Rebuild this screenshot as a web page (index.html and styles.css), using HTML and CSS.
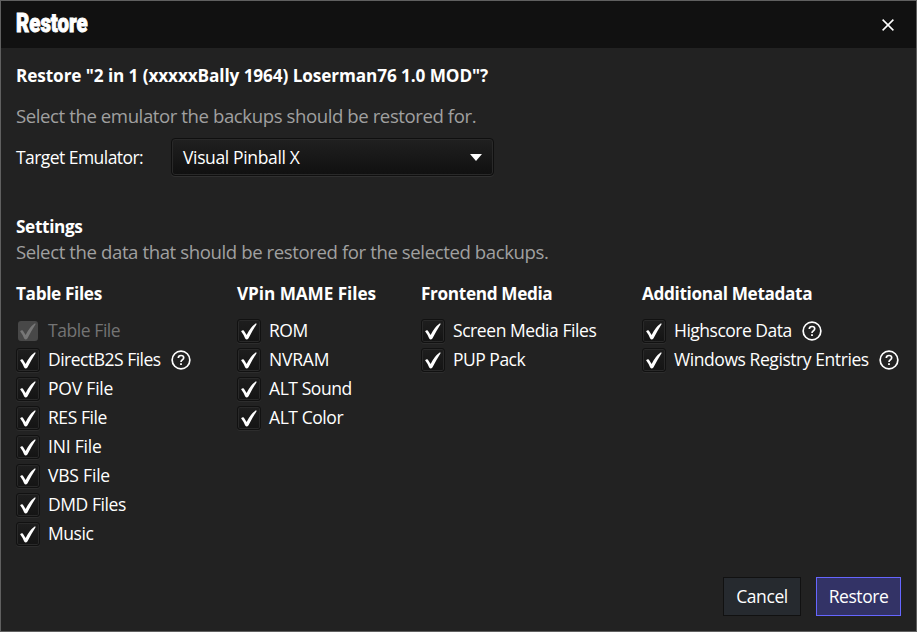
FILE: index.html
```
<!DOCTYPE html>
<html lang="en">
<head>
<meta charset="utf-8">
<title>Restore</title>
<link rel="stylesheet" href="styles.css">
</head>
<body>
<svg width="0" height="0" class="defs" aria-hidden="true">
  <symbol id="tick" viewBox="0 0 24 24"><path d="M4.1 12.3Q5.5 10.7 6.8 11.5L9.6 16Q13.5 8.3 18.6 4.6Q20.2 4 19.4 5.4Q15.4 11.6 11.4 19.5Q9.7 21.6 8.2 19.5Q6.6 15.6 4.1 12.3Z"/></symbol>
  <symbol id="help" viewBox="0 0 20 20"><circle cx="10" cy="10" r="8.85" fill="none" stroke="#fff" stroke-width="1.7"/><path d="M7.3 8Q7.4 5.5 10 5.5Q12.7 5.5 12.7 7.8Q12.7 9.1 11.2 10Q10 10.8 10 12" fill="none" stroke="#fff" stroke-width="1.7"/><path d="M9.1 13.3h1.8v1.8H9.1z" fill="#fff"/></symbol>
</svg>
<div class="dialog">
  <header class="titlebar">
    <span class="title">Restore</span>
    <svg class="close" viewBox="0 0 12 12"><path d="M.6.6l10.8 10.8M11.4.6L.6 11.4"/></svg>
  </header>
  <main class="content">
    <div class="question">Restore "2 in 1 (xxxxxBally 1964) Loserman76 1.0 MOD"?</div>
    <div class="hint first">Select the emulator the backups should be restored for.</div>
    <div class="field">
      <span class="field-label">Target Emulator:</span>
      <div class="combo"><span class="value">Visual Pinball X</span><svg class="arrow" viewBox="0 0 12 7"><path d="M0 0h12L6 7z"/></svg></div>
    </div>
    <div class="heading">Settings</div>
    <div class="hint second">Select the data that should be restored for the selected backups.</div>
    <div class="columns">
      <section>
        <h2>Table Files</h2>
        <div class="row disabled"><span class="box"><svg><use href="#tick"/></svg></span><span class="label">Table File</span></div>
        <div class="row"><span class="box"><svg><use href="#tick"/></svg></span><span class="label snug">DirectB2S Files</span><svg class="help"><use href="#help"/></svg></div>
        <div class="row"><span class="box"><svg><use href="#tick"/></svg></span><span class="label wide">POV File</span></div>
        <div class="row"><span class="box"><svg><use href="#tick"/></svg></span><span class="label">RES File</span></div>
        <div class="row"><span class="box"><svg><use href="#tick"/></svg></span><span class="label wide">INI File</span></div>
        <div class="row"><span class="box"><svg><use href="#tick"/></svg></span><span class="label wide">VBS File</span></div>
        <div class="row"><span class="box"><svg><use href="#tick"/></svg></span><span class="label">DMD Files</span></div>
        <div class="row"><span class="box"><svg><use href="#tick"/></svg></span><span class="label">Music</span></div>
      </section>
      <section>
        <h2 class="loose">VPin MAME Files</h2>
        <div class="row"><span class="box"><svg><use href="#tick"/></svg></span><span class="label">ROM</span></div>
        <div class="row"><span class="box"><svg><use href="#tick"/></svg></span><span class="label wide">NVRAM</span></div>
        <div class="row"><span class="box"><svg><use href="#tick"/></svg></span><span class="label">ALT Sound</span></div>
        <div class="row"><span class="box"><svg><use href="#tick"/></svg></span><span class="label">ALT Color</span></div>
      </section>
      <section>
        <h2>Frontend Media</h2>
        <div class="row"><span class="box"><svg><use href="#tick"/></svg></span><span class="label">Screen Media Files</span></div>
        <div class="row"><span class="box"><svg><use href="#tick"/></svg></span><span class="label snug">PUP Pack</span></div>
      </section>
      <section>
        <h2>Additional Metadata</h2>
        <div class="row"><span class="box"><svg><use href="#tick"/></svg></span><span class="label snug">Highscore Data</span><svg class="help"><use href="#help"/></svg></div>
        <div class="row"><span class="box"><svg><use href="#tick"/></svg></span><span class="label">Windows Registry Entries</span><svg class="help"><use href="#help"/></svg></div>
      </section>
    </div>
    <footer class="actions">
      <button class="btn cancel">Cancel</button>
      <button class="btn primary">Restore</button>
    </footer>
  </main>
</div>
</body>
</html>
```
FILE: styles.css
```
* { box-sizing: border-box; }
body { margin: 0; background: #222; color: #fff; font: 17.5px/24px "Open Sans", "Noto Sans", sans-serif; letter-spacing: -0.43px; white-space: nowrap; }
.defs { display: block; }
.dialog { width: 917px; height: 632px; border: 1px solid #606060; background: #222; display: flex; flex-direction: column; overflow: hidden; }
.titlebar { height: 47px; flex: none; background: #111; display: flex; justify-content: space-between; align-items: center; padding: 0 22px 0 15px; }
.title { font: 900 25px/30px "Roboto", sans-serif; letter-spacing: 0; -webkit-text-stroke: 0.9px #fff; transform: scaleX(.815); transform-origin: left; margin-top: -1px; }
.close { width: 12px; height: 12px; stroke: #fff; stroke-width: 1.5; fill: none; }
.content { flex: 1; display: flex; flex-direction: column; padding: 0 15px 15px; }
.question, .heading, h2 { font-weight: 700; font-size: 17.2px; letter-spacing: -0.35px; }
.question { margin-top: 16px; letter-spacing: -0.1px; }
.hint { font-size: 18.6px; color: #a0a0a0; letter-spacing: -0.42px; line-height: 26px; }
.first { margin-top: 15px; }
.field { display: flex; align-items: center; margin-top: 9px; height: 38px; }
.field-label { width: 155px; letter-spacing: -0.55px; padding-bottom: 1px; }
.combo { width: 323px; height: 38px; border: 1px solid #0f0f0f; border-radius: 4px; background: linear-gradient(#202020, #101010); box-shadow: inset 0 0 0 1px #292929, 0 1px #303030; display: flex; align-items: center; justify-content: space-between; padding: 0 11px; }
.value { letter-spacing: -0.36px; padding-bottom: 1px; }
.arrow { width: 12px; height: 7px; fill: #fff; }
.heading { margin-top: 39px; line-height: 24px; }
.second { margin-top: 0; letter-spacing: -0.405px; }
.columns { display: grid; grid-template-columns: 221px 184px 221px auto; margin-top: 17px; }
h2 { margin: 0 0 10px; line-height: 24px; }
.loose { letter-spacing: -0.06px; }
.row { display: flex; align-items: center; height: 29px; }
.label { padding-bottom: 2px; }
.wide { letter-spacing: -0.2px; }
.snug { letter-spacing: -0.5px; }
.box { width: 24px; height: 24px; flex: none; border: 1px solid #111; border-radius: 3px; background: linear-gradient(#1e1e1e, #141414); box-shadow: inset 0 0 0 1px #292929, 0 1px #2d2d2d; margin-right: 8px; }
.box svg { display: block; width: 24px; height: 24px; margin: -1px; fill: #fff; }
.disabled .box { background: #484848; border: 2px solid #222; box-shadow: none; border-radius: 5px; }
.disabled .box svg { margin: -2px; fill: #777; }
.disabled .label { color: #747474; }
.help { width: 20px; height: 20px; margin-left: 10px; }
.actions { display: flex; justify-content: flex-end; gap: 15px; margin-top: auto; }
.btn { height: 39px; border: 1px solid #111; border-radius: 0; background: #262a2f; color: #fff; font: inherit; letter-spacing: inherit; padding: 0 0 1px; }
.cancel { width: 78px; }
.primary { width: 85px; background: #333366; border-color: #6666ff; }
```
